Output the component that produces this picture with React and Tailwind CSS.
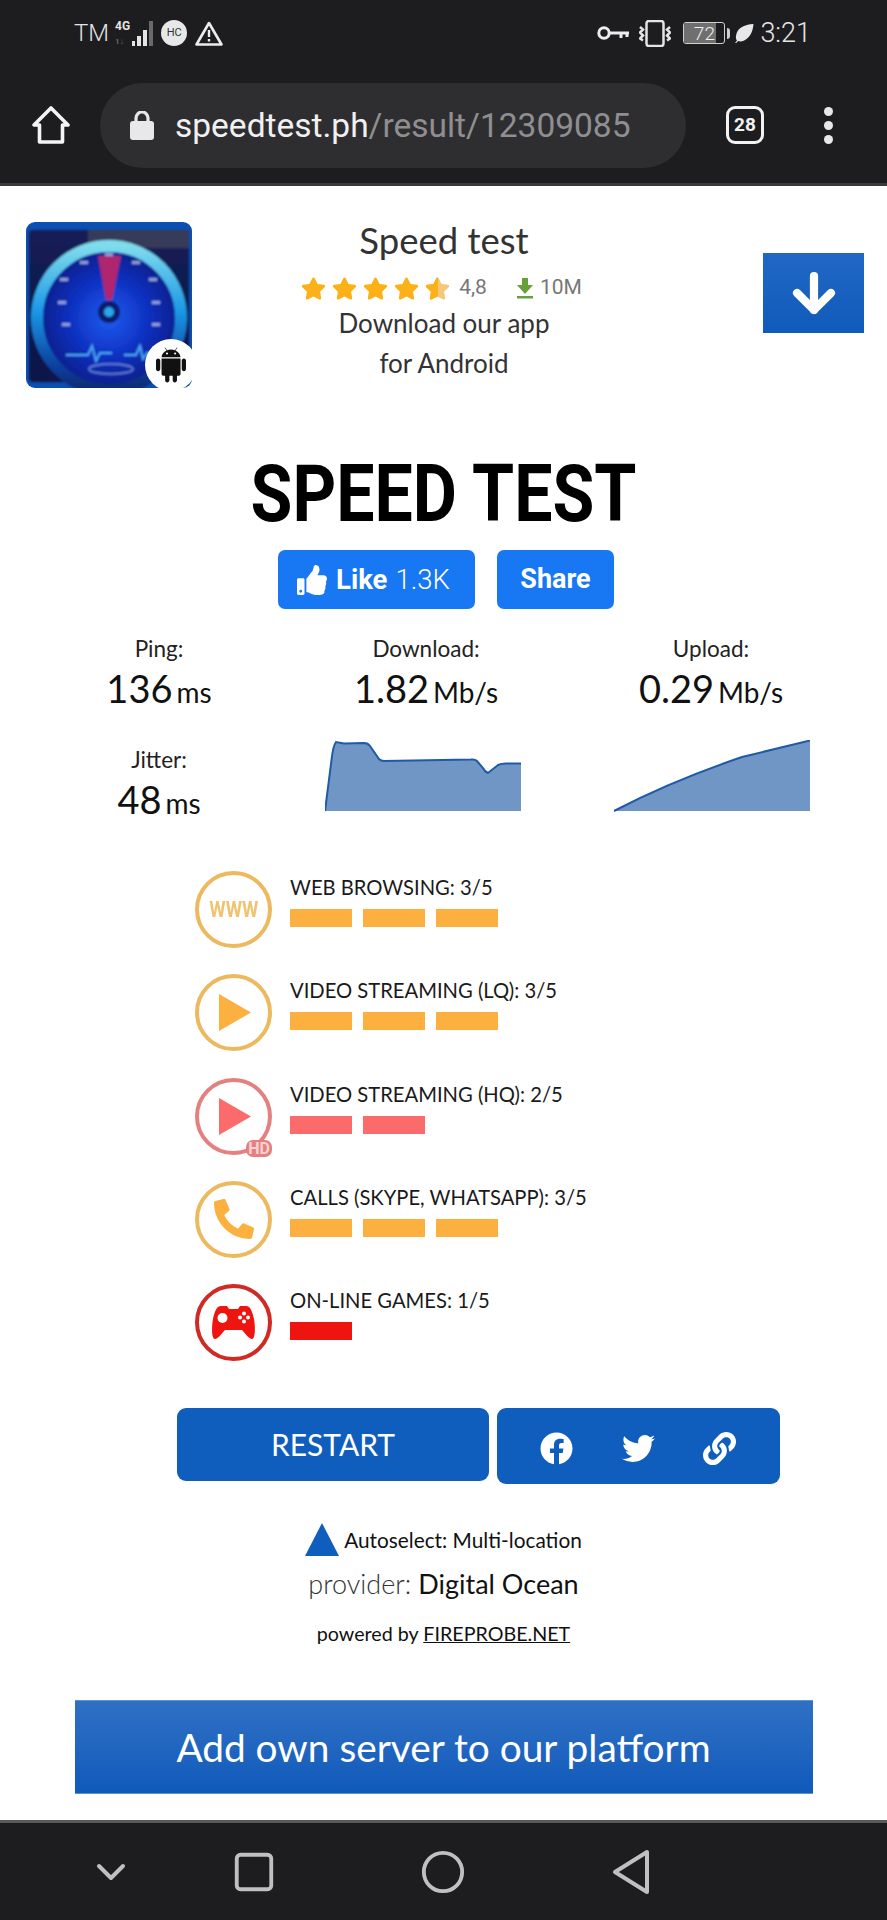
import { FaFacebook, FaLink, FaPhoneAlt, FaStar, FaThumbsUp, FaTwitter } from 'react-icons/fa'
import { AiFillAndroid } from 'react-icons/ai'
import { ArrowDown, Circle, Square, ChevronDown } from 'lucide-react'

const ROWS = [
  { key: 'web', label: 'WEB BROWSING: 3/5', score: 3, tone: 'orange' },
  { key: 'lq', label: 'VIDEO STREAMING (LQ): 3/5', score: 3, tone: 'orange' },
  { key: 'hq', label: 'VIDEO STREAMING (HQ): 2/5', score: 2, tone: 'pink' },
  { key: 'calls', label: 'CALLS (SKYPE, WHATSAPP): 3/5', score: 3, tone: 'orange' },
  { key: 'games', label: 'ON-LINE GAMES: 1/5', score: 1, tone: 'red' },
]

const TONES = {
  orange: { ring: 'border-[#edb95f]', bar: 'bg-[#fbb040]', text: 'text-[#fbb040]' },
  pink: { ring: 'border-[#e58080]', bar: 'bg-[#fb6b6b]', text: 'text-[#fb6b6b]' },
  red: { ring: 'border-[#cf2a24]', bar: 'bg-[#ee1510]', text: 'text-[#ee1510]' },
}

const DIAL_TICKS = [
  [83, 31], [58, 39], [110, 39], [38, 56], [127, 56], [36, 79], [130, 79], [40, 101], [130, 101],
]

function StatusBar() {
  return (
    <div className="flex h-[60px] items-center justify-between pl-[74px] pr-[76px] pt-[6px] text-[#e4e4e4] [font-family:Roboto,sans-serif]">
      <div className="flex items-center">
        <span className="text-[24px] font-light leading-none">TM</span>
        <div className="ml-[6px] flex h-[26px] items-end gap-[2px]">
          <div className="flex h-full flex-col justify-between">
            <span className="text-[12px] font-bold leading-none">4G</span>
            <span className="text-[8px] font-bold leading-none text-[#666]">1↓</span>
          </div>
          <span className="h-[5px] w-[3px] bg-[#e4e4e4]" />
          <span className="h-[10px] w-[4px] bg-[#e4e4e4]" />
          <span className="h-[16px] w-[4px] bg-[#e4e4e4]" />
          <span className="h-[25px] w-[4px] bg-[#6a6a6a]" />
        </div>
        <span className="ml-[8px] grid h-[26px] w-[26px] place-items-center rounded-full bg-[#e8e8e8] text-[11px] text-[#333]">HC</span>
        <svg width="28" height="25" viewBox="0 0 28 25" className="ml-[8px]" fill="none" stroke="#ececec" strokeWidth="2.6" strokeLinejoin="round">
          <path d="M14 2L26.5 23.5H1.5z" />
          <path d="M14 9v7M14 18v2.5" strokeWidth="2.4" />
        </svg>
      </div>
      <div className="flex items-center">
        <svg width="32" height="14" viewBox="0 0 32 14" fill="none" stroke="#ececec" strokeWidth="3">
          <circle cx="7" cy="7" r="5.2" />
          <path d="M12 7h20M24 7v5M30 7v4" />
        </svg>
        <svg width="32" height="27" viewBox="0 0 32 27" className="ml-[10px]" fill="none" stroke="#e4e4e4" strokeWidth="2.5">
          <rect x="7.5" y="1" width="17" height="25" rx="2.5" />
          <path d="M1 7l3 2.500-3 3 3 3-3 3 3 2M31 7l-3 2.500 3 3-3 3 3 3-3 2" />
        </svg>
        <div className="relative ml-[12px] h-[22px] w-[42px] overflow-hidden rounded-[3px] border border-[#cfcfcf]">
          <span className="block h-full w-[78%] bg-[#6f6f6f]" />
          <span className="absolute inset-0 grid place-items-center text-[19px] font-light leading-none text-[#f0f0f0]">72</span>
        </div>
        <span className="ml-[2px] h-[11px] w-[3px] rounded-r-sm bg-[#cfcfcf]" />
        <svg width="19" height="20" viewBox="0 0 19 20" className="ml-[5px]" fill="#e8e8e8">
          <path d="M18.500 1C9 1.500 2 5 1 13c-.3 2 .2 3.500 1 4.500L0 20l1 .2 2.200-2.200c1.500.7 3.800.6 6-.5C15 15 18 8 18.500 1z" />
        </svg>
        <span className="ml-[6px] text-[27px] font-light leading-none">3:21</span>
      </div>
    </div>
  )
}

function Toolbar() {
  return (
    <div className="flex h-[126px] items-start border-b-[3px] border-[#3a3a3c] pt-[23px] [font-family:Roboto,sans-serif]">
      <svg width="38" height="38" viewBox="0 0 38 38" className="ml-[32px] mt-[23px]" fill="none" stroke="#f4f4f4" strokeWidth="3.6" strokeLinejoin="round">
        <path d="M2 19L19 2l17 17h-5.500v17H7.500V19z" />
      </svg>
      <div className="ml-[30px] flex h-[85px] w-[586px] items-center rounded-full bg-[#2e2e31] pl-[30px]">
        <svg width="24" height="29" viewBox="0 0 24 29">
          <path d="M6 11V7a6 6 0 0 1 12 0v4" fill="none" stroke="#e8e8ea" strokeWidth="3.2" />
          <rect y="10" width="24" height="19" rx="3" fill="#e8e8ea" />
        </svg>
        <p className="ml-[21px] text-[33.500px] leading-none text-[#f1f1f1]">
          speedtest.ph<span className="text-[#8f8f92]">/result/12309085</span>
        </p>
      </div>
      <div className="ml-[40px] mt-[23px] grid h-[38px] w-[38px] place-items-center rounded-[9px] border-[3px] border-[#f2f2f2] text-[19px] font-bold text-[#f2f2f2]">
        28
      </div>
      <div className="ml-[60px] mt-[24px] flex flex-col gap-[5px]">
        <span className="h-[9px] w-[9px] rounded-full bg-[#e8e8e8]" />
        <span className="h-[9px] w-[9px] rounded-full bg-[#e8e8e8]" />
        <span className="h-[9px] w-[9px] rounded-full bg-[#e8e8e8]" />
      </div>
    </div>
  )
}

function AppIcon() {
  return (
    <div className="relative mt-px h-[166px] w-[166px]">
      <svg width="166" height="166" viewBox="0 0 166 166">
        <defs>
          <radialGradient id="dial" cx="50%" cy="50%" r="50%">
            <stop offset="0%" stopColor="#1e5cf0" />
            <stop offset="55%" stopColor="#0e30c0" />
            <stop offset="100%" stopColor="#0a1e86" />
          </radialGradient>
          <linearGradient id="rim" x1="0" y1="0" x2="0" y2="1">
            <stop offset="0%" stopColor="#7fdcec" />
            <stop offset="45%" stopColor="#1b98e6" />
            <stop offset="85%" stopColor="#0b3d9c" />
            <stop offset="100%" stopColor="#0a2a70" />
          </linearGradient>
          <linearGradient id="frame" x1="0" y1="0" x2="0" y2="1">
            <stop offset="0%" stopColor="#141f55" />
            <stop offset="100%" stopColor="#0a1648" />
          </linearGradient>
          <filter id="soft">
            <feGaussianBlur stdDeviation="1.2" />
          </filter>
        </defs>
        <rect width="166" height="166" rx="9" fill="#0d4fb0" />
        <g filter="url(#soft)">
          <rect x="3" y="8" width="160" height="152" rx="4" fill="url(#frame)" />
          <rect x="62" y="8" width="101" height="18" fill="#343a58" />
          <circle cx="83" cy="96" r="72" fill="url(#dial)" stroke="url(#rim)" strokeWidth="12" />
          <path d="M72 34 L95 34 L86 78 L80 78 Z" fill="#b0286e" />
          <circle cx="83" cy="90" r="11" fill="#0a1c6c" />
          <circle cx="83" cy="90" r="5" fill="#2aa6ee" />
          {DIAL_TICKS.map(([x, y]) => (
            <rect key={`${x}-${y}`} x={x - 4} y={y} width="8" height="3" fill="#b8c8ee" opacity="0.75" />
          ))}
          <path d="M40 133h22l4-9 4 15 4-8h12M98 133h12l4-9 3 13 4-6h8" fill="none" stroke="#4aa8f4" strokeWidth="2" />
          <ellipse cx="85" cy="147" rx="22" ry="5" fill="none" stroke="#6a8ce0" strokeWidth="1.5" />
        </g>
      </svg>
      <div className="absolute bottom-[-3px] right-[-5px] grid h-[52px] w-[52px] place-items-center rounded-full bg-white">
        <AiFillAndroid size={40} className="text-[#111]" />
      </div>
    </div>
  )
}

function RatingStars() {
  return (
    <div className="flex gap-[6px] text-[#fbb117]">
      <FaStar size={25} />
      <FaStar size={25} />
      <FaStar size={25} />
      <FaStar size={25} />
      <div className="relative h-[25px] w-[25px] text-[#f3c878]">
        <FaStar size={25} />
        <div className="absolute left-0 top-0 h-[25px] w-[13px] overflow-hidden text-[#fbb117]">
          <FaStar size={25} />
        </div>
      </div>
    </div>
  )
}

function AppBanner() {
  return (
    <div className="flex items-start pl-[26px] pt-[35px]">
      <AppIcon />
      <div className="flex w-[504px] flex-col items-center text-[#333] [font-family:Lato,sans-serif]">
        <p className="mb-[14px] h-[38px] text-[36.500px] leading-[38px]">Speed test</p>
        <div className="flex h-[30px] items-center pr-[5px]">
          <RatingStars />
          <span className="ml-[9px] text-[21px] text-[#777] [font-family:Roboto,sans-serif]">4,8</span>
          <svg width="18" height="22" viewBox="0 0 18 22" className="ml-[29px]" fill="#689f38">
            <path d="M6 1h6v7h5l-8 9-8-9h5zM1 19h16v2.500H1z" />
          </svg>
          <span className="ml-[6px] text-[21px] text-[#777] [font-family:Roboto,sans-serif]">10M</span>
        </div>
        <p className="text-[26px] leading-[40px]">Download our app</p>
        <p className="text-[26px] leading-[40px]">for Android</p>
      </div>
      <div className="ml-[67px] mt-[32px] grid h-[80px] w-[101px] place-items-center bg-gradient-to-b from-[#2168c4] to-[#0f5abb]">
        <ArrowDown size={58} strokeWidth={3.4} className="text-white" />
      </div>
    </div>
  )
}

function Social() {
  return (
    <div className="mt-[16px] flex justify-center gap-[22px] pl-[5px] text-white [font-family:Roboto,sans-serif]">
      <div className="flex h-[59px] w-[197px] items-center rounded-[7px] bg-[#1877f2] pl-[19px] text-[27.500px]">
        <FaThumbsUp size={30} />
        <span className="ml-[9px] font-bold">Like</span>
        <span className="ml-[8px] font-light">1.3K</span>
      </div>
      <div className="grid h-[59px] w-[117px] place-items-center rounded-[7px] bg-[#1877f2] text-[27px] font-bold">Share</div>
    </div>
  )
}

function Stat({ label, value, unit }) {
  return (
    <div className="flex flex-col items-center text-[#111]">
      <p className="h-[30px] text-[22.500px] leading-[30px] text-[#222]">{label}</p>
      <p className="mt-[4px] flex h-[40px] items-baseline leading-[40px]">
        <span className="text-[38px]">{value}</span>
        <span className="ml-[4px] text-[28px]">{unit}</span>
      </p>
    </div>
  )
}

function AreaChart({ area, line }) {
  return (
    <svg width="196" height="72" viewBox="0 0 196 72" className="mt-[-5px]">
      <path d={`${line} L196 71 L0 71 Z`} fill="#7096c6" />
      <path d={line} fill="none" stroke="#1f5aa8" strokeWidth="2" />
    </svg>
  )
}

function Stats() {
  return (
    <div className="mt-[25px] grid grid-cols-[198px_202px_196px] pl-[60px] [font-family:Lato,sans-serif] [column-gap:67px]">
      <Stat label="Ping:" value="136" unit="ms" />
      <Stat label="Download:" value="1.82" unit="Mb/s" />
      <div className="ml-[38px]">
        <Stat label="Upload:" value="0.29" unit="Mb/s" />
      </div>
      <div className="mt-[37px]">
        <Stat label="Jitter:" value="48" unit="ms" />
      </div>
      <div className="mt-[37px]">
        <AreaChart line="M0 71 L6.500 20 Q8 6 11 2 L19 3.500 L39 3 Q43 3 45 6 L54 19 Q56 21 59 21 L146 19.500 Q150 19 152 21 L158 28 Q160 32 163 33 L173 25 Q176 23.500 181 23.500 L196 23.500" />
      </div>
      <div className="ml-[20px] mt-[37px]">
        <AreaChart line="M0 71 C40 50 90 30 128 17 L196 0.500" />
      </div>
    </div>
  )
}

function RowIcon({ row }) {
  const tone = TONES[row.tone]
  return (
    <div className={`relative grid h-[77px] w-[77px] shrink-0 place-items-center rounded-full border-[4px] ${tone.ring} ${tone.text}`}>
      {row.key === 'web' && <span className="scale-x-[0.85] text-[22px] font-bold leading-none text-[#f0c371] [font-family:Roboto,sans-serif]">WWW</span>}
      {(row.key === 'lq' || row.key === 'hq') && (
        <svg width="32" height="37" viewBox="0 0 32 37" className="ml-[3px]" fill="currentColor">
          <path d="M0 0l32 18.500L0 37z" />
        </svg>
      )}
      {row.key === 'hq' && (
        <span className="absolute bottom-[-6px] right-[-4px] rounded-[7px] bg-[#e58080] px-[2px] text-[16px] font-bold leading-[17px] text-[#fbd0d0] [font-family:Roboto,sans-serif]">HD</span>
      )}
      {row.key === 'calls' && <FaPhoneAlt size={40} />}
      {row.key === 'games' && (
        <svg width="47" height="33" viewBox="0 0 47 33" fill="currentColor">
          <path d="M11 0h6l2 3h9l2-3h6c4 0 6 4 8 13 1.500 8 1.500 20-2 20-3 0-7-6-10-9H15c-3 3-7 9-10 9-3.500 0-3.500-12-2-20C5 4 7 0 11 0z" />
          <circle cx="12.500" cy="12" r="5" fill="#fff" />
          <circle cx="34" cy="7.500" r="2" fill="#fff" />
          <circle cx="34" cy="15.500" r="2" fill="#fff" />
          <circle cx="30" cy="11.500" r="2" fill="#fff" />
          <circle cx="38" cy="11.500" r="2" fill="#fff" />
        </svg>
      )}
    </div>
  )
}

function Rows() {
  return (
    <div className="mt-[52px] flex flex-col gap-[26.250px] pl-[195px]">
      {ROWS.map((row) => (
        <div key={row.key} className="flex">
          <RowIcon row={row} />
          <div className="ml-[18px]">
            <p className="h-[32px] text-[20.200px] leading-[32px] text-[#1a1a1a] [font-family:Lato,sans-serif]">{row.label}</p>
            <div className="mt-[6px] flex gap-[11px]">
              {Array.from({ length: row.score }).map((_, i) => (
                <span key={i} className={`h-[18px] w-[62px] ${TONES[row.tone].bar}`} />
              ))}
            </div>
          </div>
        </div>
      ))}
    </div>
  )
}

function Actions() {
  return (
    <div className="mt-[47px] flex items-start gap-[8px] pl-[177px] text-white">
      <div className="grid h-[73px] w-[312px] place-items-center rounded-[9px] bg-[#0f5dbd] text-[30px] [font-family:Lato,sans-serif]">RESTART</div>
      <div className="flex h-[76px] w-[283px] items-center justify-between rounded-[9px] bg-[#0f5dbd] pl-[43px] pr-[44px] pt-[4px]">
        <FaFacebook size={33} />
        <FaTwitter size={33} />
        <FaLink size={33} />
      </div>
    </div>
  )
}

function Footer() {
  return (
    <div className="flex flex-col items-center text-[#111] [font-family:Lato,sans-serif]">
      <div className="mt-[39px] flex items-center">
        <span className="h-0 w-0 border-x-[17px] border-b-[33px] border-x-transparent border-b-[#0f5dbd]" />
        <span className="ml-[5px] text-[20.800px]">Autoselect: Multi-location</span>
      </div>
      <p className="mt-[8px] text-[27px]">
        <span className="font-light text-[#333]">provider:</span> Digital Ocean
      </p>
      <p className="mt-[14px] text-[19.700px]">
        powered by <span className="underline">FIREPROBE.NET</span>
      </p>
      <div className="mt-[52px] grid h-[94px] w-[738px] place-items-center border-y border-[#5c93d8] bg-gradient-to-b from-[#2f70c4] to-[#0f5abb] text-[38.800px] text-white">
        Add own server to our platform
      </div>
    </div>
  )
}

function NavBar() {
  return (
    <div className="mt-auto flex h-[100px] items-center border-t-[3px] border-[#5a5a5a] bg-[#1d1d1f] text-[#c0c0c0]">
      <ChevronDown size={48} strokeWidth={2} className="ml-[87px]" />
      <Square size={46} strokeWidth={2} className="ml-[96px]" />
      <Circle size={46} strokeWidth={2} className="ml-[143px]" />
      <svg width="38" height="46" viewBox="0 0 38 46" className="ml-[146px]" fill="none" stroke="currentColor" strokeWidth="4" strokeLinejoin="round">
        <path d="M35 3v40L3 23z" />
      </svg>
    </div>
  )
}

export default function App() {
  return (
    <div className="flex h-[1920px] w-[887px] flex-col overflow-hidden bg-white">
      <div className="bg-[#1d1d1f]">
        <StatusBar />
        <Toolbar />
      </div>
      <AppBanner />
      <h1 className="mt-[66px] scale-x-[0.85] text-center text-[80px] font-bold leading-[80px] text-black [font-family:Roboto,sans-serif]">SPEED TEST</h1>
      <Social />
      <Stats />
      <Rows />
      <Actions />
      <Footer />
      <NavBar />
    </div>
  )
}
